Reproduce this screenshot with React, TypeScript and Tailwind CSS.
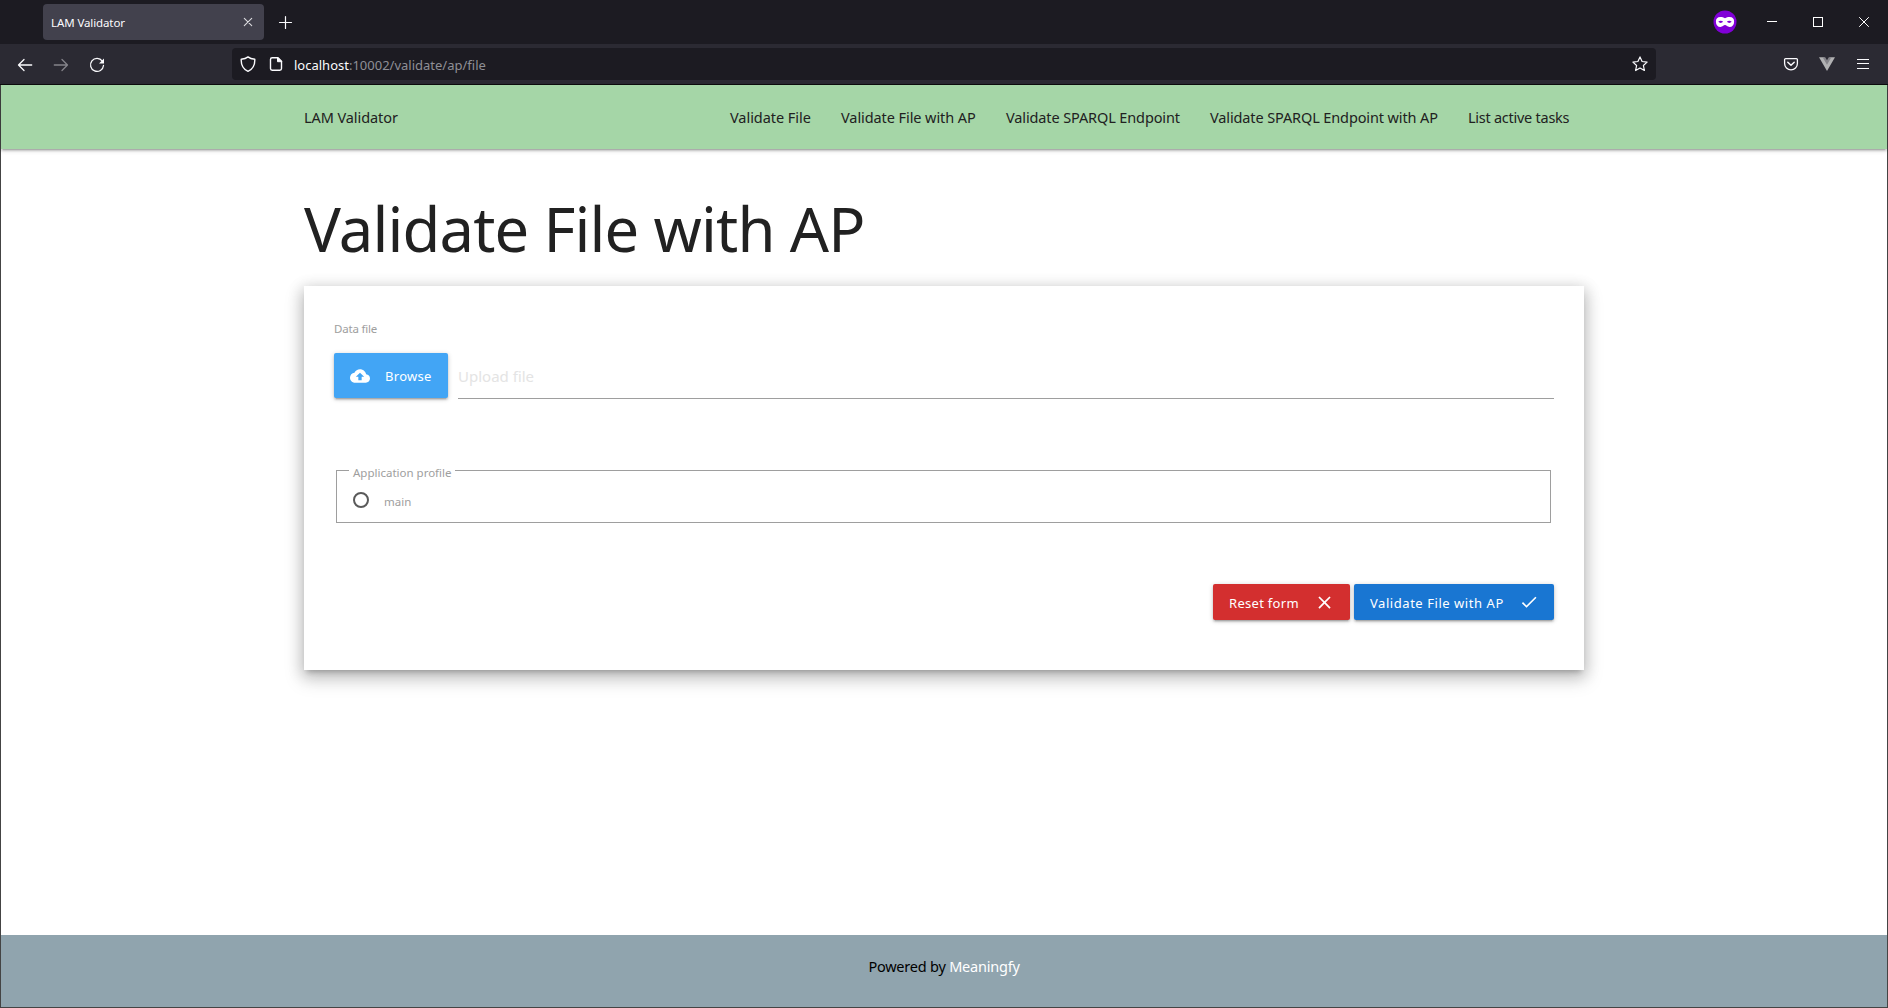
import type { ReactNode } from 'react';

const navItems = [
  { label: 'Validate File', cls: 'w-[111px] tracking-[-0.05px]' },
  { label: 'Validate File with AP', cls: 'w-[165px] tracking-[-0.08px]' },
  { label: 'Validate SPARQL Endpoint', cls: 'w-[204px] tracking-[-0.12px]' },
  { label: 'Validate SPARQL Endpoint with AP', cls: 'w-[258px] tracking-[-0.12px]' },
  { label: 'List active tasks', cls: 'w-[131px] tracking-[-0.26px]' },
];

function Icon({ children, className = '', size = 16 }: { children: ReactNode; className?: string; size?: number }) {
  return (
    <svg
      width={size}
      height={size}
      viewBox="0 0 16 16"
      fill="none"
      stroke="currentColor"
      strokeWidth="1.3"
      strokeLinecap="round"
      strokeLinejoin="round"
      className={`shrink-0 ${className}`}
    >
      {children}
    </svg>
  );
}

function TitleBar() {
  return (
    <div className="flex h-11 items-center bg-[#1c1b22] pl-[43px] text-[#fbfbfe]">
      <div className="flex h-9 w-[221px] items-center justify-between rounded bg-[#42414d] pr-2 pl-2">
        <span className="pt-px text-[11.5px] tracking-[-0.1px]">LAM Validator</span>
        <Icon className="text-[#dcdce0]">
          <path d="M4.3 4.3l7.4 7.4M11.7 4.3l-7.4 7.4" strokeWidth="1.1" />
        </Icon>
      </div>
      <Icon className="ml-[13px]">
        <path d="M8.5 2.5v12M2.5 8.5h12" strokeWidth="1.2" />
      </Icon>
      <div className="ml-auto flex items-center gap-9 pr-[19px]">
        <svg width="24" height="24" viewBox="0 0 24 24" className="-mr-[6px]">
          <circle cx="12" cy="12" r="11.5" fill="#8000d7" />
          <path
            fill="#fff"
            fillRule="evenodd"
            d="M12 8.2C13.300 7.300 14.900 6.900 16.600 6.900c3 0 4.500 1.500 4.500 4.600 0 3.600-1.900 5.500-4.500 5.500-2.300 0-3.100-1.900-4.600-1.900s-2.300 1.900-4.600 1.900c-2.600 0-4.500-1.900-4.500-5.500 0-3.100 1.500-4.600 4.500-4.600 1.700 0 3.300.4 4.600 1.300zM5.300 11.800c1.100 1.500 3.700 1.500 4.800 0-1.100-1.500-3.700-1.500-4.800 0zm8.600 0c1.100 1.500 3.700 1.500 4.800 0-1.100-1.500-3.700-1.500-4.800 0z"
          />
        </svg>
        <svg width="10" height="10" shapeRendering="crispEdges">
          <path d="M0 4.5h10" stroke="#fff" />
        </svg>
        <svg width="10" height="10" fill="none" shapeRendering="crispEdges">
          <path d="M.5.5h9v9h-9z" stroke="#fff" />
        </svg>
        <svg width="10" height="10">
          <path d="M.2.2l9.6 9.6M9.8.2L.2 9.8" stroke="#fff" />
        </svg>
      </div>
    </div>
  );
}

function Toolbar() {
  return (
    <div className="flex h-[41px] items-center border-b border-[#0c0c0d] bg-[#2b2a33] text-[#fbfbfe]">
      <div className="flex w-[232px] gap-5 pt-px pl-[17px]">
        <Icon>
          <path d="M14.700 8H1.500M7 2.500L1.500 8 7 13.500" />
        </Icon>
        <Icon className="text-[#85848b]">
          <path d="M1.300 8h13.200M9 2.500L14.500 8 9 13.500" />
        </Icon>
        <Icon>
          <path d="M13.300 4.100A6.500 6.500 0 1 0 14.500 8.500" />
          <path d="M15 1.500v5h-5z" fill="currentColor" stroke="none" />
        </Icon>
      </div>
      <div className="flex h-8 w-[1424px] items-center rounded bg-[#1c1b22] px-2">
        <Icon>
          <path d="M8 .9C6.300 2.300 3.800 3 1.200 3.200 1 8.600 2.600 13 8 15.300 13.400 13 15 8.600 14.800 3.200 12.200 3 9.700 2.300 8 .9z" strokeWidth="1.4" />
        </Icon>
        <Icon className="ml-3">
          <path d="M10 1.700H4.200a1.700 1.700 0 0 0-1.700 1.700v9.200a1.700 1.700 0 0 0 1.700 1.700h7.600a1.700 1.700 0 0 0 1.700-1.700V5.200z" strokeWidth="1.4" />
          <path d="M9.500 1.700v4h4z" fill="currentColor" strokeWidth="1" />
        </Icon>
        <span className="ml-[10px] pt-[3px] text-[13px]">
          localhost<span className="text-[#8f8f96]">:10002/validate/ap/file</span>
        </span>
        <Icon className="ml-auto">
          <path d="M8 .9l2.100 4.600 5 .6-3.700 3.400 1 5L8 12l-4.400 2.500 1-5L.9 6.100l5-.6z" strokeWidth="1.2" />
        </Icon>
      </div>
      <div className="ml-auto flex gap-5 pr-[17px]">
        <Icon>
          <path d="M2.600 2.600h10.800a1 1 0 0 1 1 1v3.800a6.400 6.400 0 0 1-12.800 0V3.600a1 1 0 0 1 1-1z" />
          <path d="M4.800 6.300L8 9.300l3.200-3" strokeWidth="1.5" />
        </Icon>
        <Icon>
          <path d="M0 1.200h5.200L8 6.200l2.800-5H16L8 15z" fill="#b1b1b3" stroke="none" />
          <path d="M3.600 1.200h2.600L8 4.200l1.800-3h2.600L8 8.800z" fill="#85848a" stroke="none" />
        </Icon>
        <Icon>
          <path d="M2 3.500h12M2 7.500h12M2 12.500h12" strokeWidth="1" strokeLinecap="butt" />
        </Icon>
      </div>
    </div>
  );
}

const raised =
  'shadow-[0_2px_2px_0_rgba(0,0,0,0.14),0_3px_1px_-2px_rgba(0,0,0,0.12),0_1px_5px_0_rgba(0,0,0,0.2)]';

export default function App() {
  return (
    <div className="flex h-screen w-full flex-col overflow-hidden bg-white font-['Noto_Sans','Open_Sans',sans-serif] text-[#212121]">
      <TitleBar />
      <Toolbar />
      <div className="flex flex-1 flex-col border-x border-b border-[#444]">
        <nav className={`h-16 bg-[#a5d6a7] text-[14.5px] ${raised}`}>
          <div className="mx-auto flex h-full w-[1280px] items-center justify-between pt-[2px] whitespace-nowrap">
            <span className="tracking-[-0.08px]">LAM Validator</span>
            <div className="flex">
              {navItems.map((n) => (
                <a key={n.label} className={`px-[15px] ${n.cls}`}>
                  {n.label}
                </a>
              ))}
            </div>
          </div>
        </nav>

        <main className="mx-auto flex w-[1280px] flex-1 flex-col">
          <h1 className="mt-[42px] h-[95px] text-[61.5px] leading-[75px] tracking-[-0.85px] whitespace-nowrap">
            Validate File with AP
          </h1>
          <form className="flex h-[384px] flex-col px-[30px] shadow-[0_8px_17px_2px_rgba(0,0,0,0.17),0_3px_14px_2px_rgba(0,0,0,0.14),0_5px_5px_-3px_rgba(0,0,0,0.2)]">
            <label className="mt-[34px] h-[33px] text-[11.5px] leading-[18px] tracking-[-0.2px] text-[#9e9e9e]">Data file</label>
            <div className="flex h-[46px]">
              <button type="button" className={`flex h-[45px] w-[114px] items-center rounded-[2px] bg-[#42a5f5] pl-4 text-[13px] text-white ${raised}`}>
                <svg width="20" height="20" viewBox="0 0 24 24" fill="currentColor">
                  <path d="M19.350 10.040C18.670 6.590 15.640 4 12 4 9.110 4 6.600 5.640 5.350 8.040 2.340 8.360 0 10.910 0 14c0 3.310 2.690 6 6 6h13c2.760 0 5-2.240 5-5 0-2.640-2.050-4.780-4.650-4.960zM14 13v4h-4v-4H7l5-5 5 5h-3z" />
                </svg>
                <span className="ml-[15px] pt-[2px] tracking-[0.3px]">Browse</span>
              </button>
              <div className="ml-[10px] flex-1 border-b border-[#9e9e9e] text-[15px] leading-[46px] text-[#e4e4e4]">Upload file</div>
            </div>
            <div className="mt-[71px] mr-[3px] ml-[2px] h-[53px] border border-[#9e9e9e] pl-3 text-[11.5px] text-[#9e9e9e]">
              <div className="-mt-[8px] h-[18px] w-[106px] bg-white px-1 leading-[20px] whitespace-nowrap">Application profile</div>
              <label className="mt-[11px] flex h-4 items-center pl-1">
                <span className="h-4 w-4 rounded-full border-2 border-[#5a5a5a]" />
                <span className="ml-[15px] pt-[3px] leading-none">main</span>
              </label>
            </div>
            <div className="mt-[61px] flex justify-end gap-1 text-[13px] text-white">
              <button type="button" className={`flex h-9 w-[137px] items-center justify-between rounded-[2px] bg-[#d32f2f] pr-[15px] pl-4 ${raised}`}>
                <span className="pt-[3px] tracking-[0.3px]">Reset form</span>
                <svg width="21" height="21" viewBox="0 0 24 24" fill="currentColor">
                  <path d="M19 6.410L17.590 5 12 10.590 6.410 5 5 6.410 10.590 12 5 17.590 6.410 19 12 13.410 17.590 19 19 17.590 13.410 12z" />
                </svg>
              </button>
              <button type="button" className={`flex h-9 w-[200px] items-center justify-between rounded-[2px] bg-[#1976d2] pr-[15px] pl-4 ${raised}`}>
                <span className="pt-[3px] tracking-[0.55px]">Validate File with AP</span>
                <svg width="20" height="20" viewBox="0 0 24 24" fill="currentColor">
                  <path d="M9 16.170L4.830 12l-1.420 1.410L9 19 21 7l-1.410-1.410z" />
                </svg>
              </button>
            </div>
          </form>
        </main>

        <footer className="h-[72px] bg-[#90a4ae] pt-5 text-center text-[14.5px] leading-[22px] tracking-[-0.22px] text-black">
          Powered by <a className="text-white">Meaningfy</a>
        </footer>
      </div>
    </div>
  );
}
